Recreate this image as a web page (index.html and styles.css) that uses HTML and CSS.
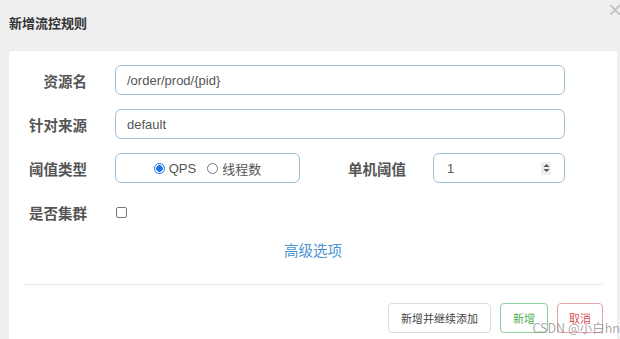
FILE: index.html
```html
<!DOCTYPE html>
<html>
<head>
    <meta charset="utf-8">
    <title>新增流控规则</title>
    <link rel="stylesheet" href="styles.css">
</head>
<body>
    <div class="dialog">
        <div class="dialog-header">
            <h1>新增流控规则</h1>
            <span class="close">&times;</span>
        </div>

        <div class="dialog-body">
            <div class="form-row">
                <label class="form-label">资源名</label>
                <div class="form-input wide">/order/prod/{pid}</div>
            </div>

            <div class="form-row">
                <label class="form-label">针对来源</label>
                <div class="form-input wide">default</div>
            </div>

            <div class="form-row">
                <label class="form-label">阈值类型</label>
                <div class="radio-box">
                    <span class="radio checked"></span><span class="radio-text">QPS</span>
                    <span class="radio"></span><span class="radio-text">线程数</span>
                </div>
                <label class="form-label second">单机阈值</label>
                <div class="form-input number">
                    <span>1</span>
                    <span class="spinner">
                        <svg width="7" height="10" viewBox="0 0 7 10"><path d="M3.5 1 L6.5 4 H0.5 Z M3.5 9 L6.5 6 H0.5 Z" fill="#555"/></svg>
                    </span>
                </div>
            </div>

            <div class="form-row last">
                <label class="form-label">是否集群</label>
                <span class="checkbox"></span>
            </div>

            <div class="advanced">高级选项</div>

            <div class="divider"></div>

            <div class="actions">
                <button class="btn">新增并继续添加</button>
                <button class="btn btn-add">新增</button>
                <button class="btn btn-cancel">取消</button>
            </div>
        </div>

        <span class="watermark">CSDN @小白hn</span>
    </div>
</body>
</html>
```

FILE: styles.css
```css
* {
    margin: 0;
    padding: 0;
    box-sizing: border-box;
    font-family: "Liberation Sans", "Noto Sans CJK SC", sans-serif;
}

body {
    background-color: #efefef;
    width: 620px;
    height: 339px;
    overflow: hidden;
}

.dialog {
    position: relative;
    height: 339px;
}

.dialog-header {
    height: 51px;
    padding: 13px 9px 0;
}

.dialog-header h1 {
    font-size: 13px;
    font-weight: 700;
    color: #333;
    font-family: "Noto Sans CJK SC", sans-serif;
}

.close {
    position: absolute;
    top: 0;
    right: -2px;
    font-size: 24px;
    color: #c4c4c4;
    line-height: 20px;
}

.dialog-body {
    margin-left: 9px;
    width: 608px;
    height: 300px;
    background-color: #fff;
    border-radius: 3px;
    padding: 14px 14px 0 0;
}

.form-row {
    display: flex;
    align-items: center;
    height: 30px;
    margin-bottom: 14px;
}

.form-row.last {
    margin-bottom: 0;
}

.form-label {
    width: 78px;
    text-align: right;
    font-size: 14.5px;
    font-weight: 700;
    color: #555;
    font-family: "Noto Sans CJK SC", sans-serif;
    margin-right: 28px;
}

.form-label.second {
    width: 106px;
    margin-right: 27px;
}

.form-input {
    height: 30px;
    border: 1px solid #a3c1d5;
    border-radius: 6px;
    padding: 0 11px;
    font-size: 13px;
    color: #555;
    display: flex;
    align-items: center;
}

.form-input.wide {
    width: 450px;
}

.form-input.number {
    width: 132px;
    justify-content: space-between;
    padding: 0 13px 0 13px;
}

.spinner {
    width: 10px;
    height: 13px;
    background-color: #eee;
    display: flex;
    align-items: center;
    justify-content: center;
}

.radio-box {
    width: 185px;
    height: 30px;
    border: 1px solid #a3c1d5;
    border-radius: 6px;
    display: flex;
    align-items: center;
    justify-content: center;
    font-size: 13px;
    color: #555;
}

.radio {
    width: 11px;
    height: 11px;
    border: 1px solid #777;
    border-radius: 50%;
    margin-right: 4px;
}

.radio.checked {
    border: 1px solid #1a73e8;
    background: radial-gradient(circle, #1a73e8 0 3px, #fff 3.5px);
}

.radio-text {
    margin-right: 11px;
}

.radio-text:last-child {
    margin-right: 0;
    font-family: "Noto Sans CJK SC", sans-serif;
}

.checkbox {
    width: 11px;
    height: 11px;
    border: 1px solid #777;
    border-radius: 2px;
    margin-left: 1px;
}

.advanced {
    margin-top: 8px;
    height: 30px;
    line-height: 30px;
    text-align: center;
    padding-left: 14px;
    font-size: 14.5px;
    color: #4a94cf;
    font-family: "Noto Sans CJK SC", sans-serif;
}

.divider {
    margin: 19px 0 0 14px;
    height: 1px;
    background-color: #e6e6e6;
}

.actions {
    margin-top: 18px;
    display: flex;
    justify-content: flex-end;
    gap: 9px;
}

.btn {
    height: 30px;
    padding: 0 12px;
    border: 1px solid #ddd;
    border-radius: 4px;
    background-color: #fff;
    font-size: 11px;
    color: #444;
    font-family: "Noto Sans CJK SC", sans-serif;
}

.btn-add {
    border-color: #8fd19e;
    color: #4cae4c;
}

.btn-cancel {
    padding: 0 11px;
    border-color: #e8a3a8;
    color: #d9534f;
}

.watermark {
    position: absolute;
    right: 0;
    bottom: 2px;
    font-size: 12.5px;
    color: rgba(130, 130, 130, 0.7);
    font-family: "Noto Sans CJK SC", sans-serif;
}
```
